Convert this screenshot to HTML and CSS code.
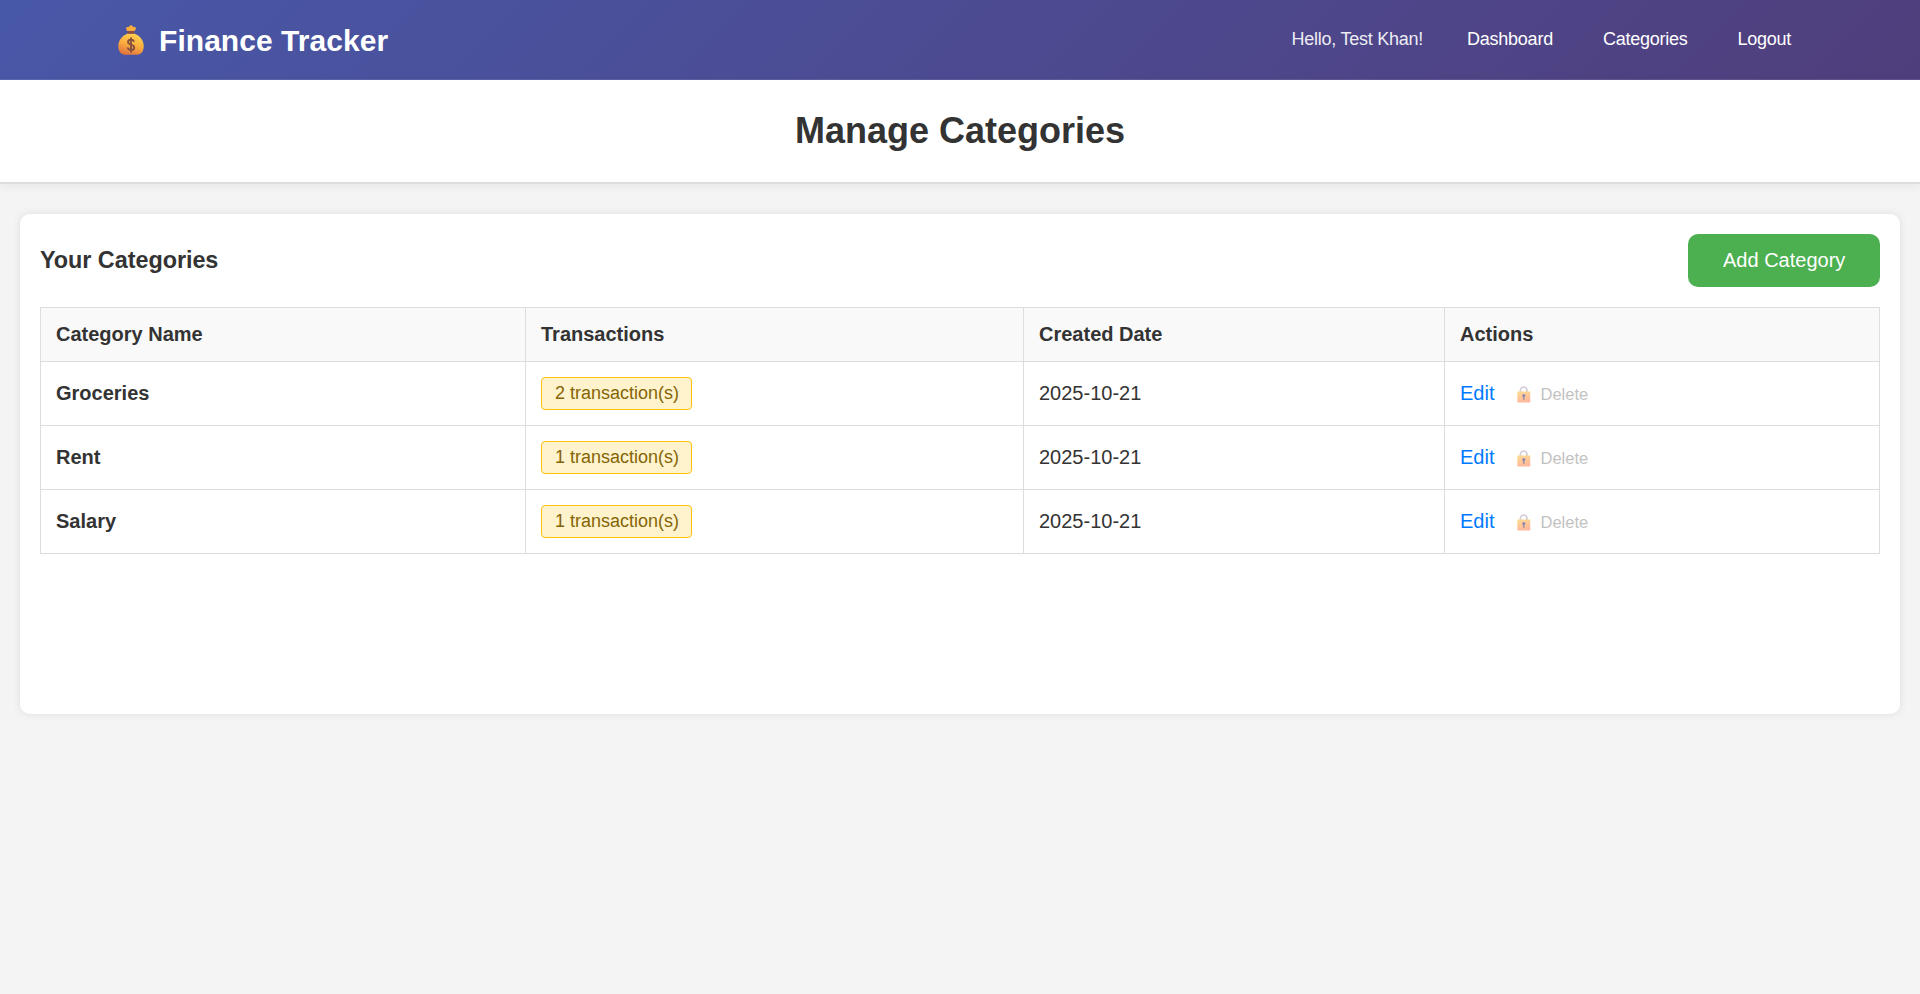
FILE: index.html
```html
<!DOCTYPE html>
<html lang="en">
<head>
<meta charset="utf-8">
<title>Manage Categories</title>
<link rel="stylesheet" href="styles.css">
</head>
<body>
<svg class="defs" width="0" height="0" aria-hidden="true">
  <defs>
    <linearGradient id="gold" x1="0.7" y1="0" x2="0.35" y2="1">
      <stop offset="0" stop-color="#ffd34f"/><stop offset="0.5" stop-color="#fbb040"/><stop offset="1" stop-color="#e0733f"/>
    </linearGradient>
    <linearGradient id="body" x1="0" y1="0" x2="0.3" y2="1">
      <stop offset="0" stop-color="#ffc648"/><stop offset="1" stop-color="#ff8a5c"/>
    </linearGradient>
    <symbol id="lock" viewBox="0 0 14 17">
      <path d="M3.4 7V4.6a3.3 3.6 0 0 1 6.6 0V7" fill="none" stroke="#b3abba" stroke-width="1.7"/>
      <rect x="0.3" y="5.6" width="13" height="10.8" rx="0.9" fill="url(#body)"/>
      <circle cx="6.8" cy="9.6" r="1.6" fill="#4b3f70"/>
      <rect x="6.1" y="9.6" width="1.4" height="4.2" rx="0.6" fill="#4b3f70"/>
    </symbol>
  </defs>
</svg>
<nav class="navbar">
  <a class="brand">
    <svg class="bag" viewBox="0 0 26 30">
      <path d="M9 5.500 8.600 2.400 10.600 2.600 11.500 1.200Q13 .2 14.500 1.200L15.400 2.600 17.500 2.400 16.800 5.500Z" fill="#fbae3c" stroke="#fbae3c" stroke-width=".8" stroke-linejoin="round"/>
      <path d="M9.800 8.500C4 10.500.3 15.500.3 21c0 5.500 2.700 8.700 7 8.700h11.400c4.300 0 7-3.200 7-8.700 0-5.500-3.700-10.500-9.500-12.500Z" fill="url(#gold)"/>
      <rect x="9.400" y="5.900" width="7.300" height="2.900" rx="1" fill="#8c4f48"/>
      <path d="M16 16.800c-.3-1.500-1.500-2.200-3-2.200-1.700 0-3 .9-3 2.500 0 3.400 6.200 1.800 6.200 5.300 0 1.700-1.400 2.600-3.200 2.600s-3.100-.9-3.300-2.500M13 12.400v15" fill="none" stroke="#85503f" stroke-width="1.900"/>
    </svg>
    <span class="brand-name">Finance Tracker</span>
  </a>
  <div class="links">
    <span class="hello">Hello, Test Khan!</span>
    <a>Dashboard</a>
    <a>Categories</a>
    <a>Logout</a>
  </div>
</nav>
<header class="page-head"><h1>Manage Categories</h1></header>
<main class="card">
  <div class="card-head">
    <h2>Your Categories</h2>
    <button class="add">Add Category</button>
  </div>
  <table class="table">
    <colgroup><col class="c-name"><col class="c-count"><col class="c-date"><col></colgroup>
    <thead><tr><th>Category Name</th><th>Transactions</th><th>Created Date</th><th>Actions</th></tr></thead>
    <tbody>
      <tr><td><strong>Groceries</strong></td><td><span class="badge">2 transaction(s)</span></td><td>2025-10-21</td>
        <td><div class="actions"><a class="edit">Edit</a><span class="locked"><svg><use href="#lock"/></svg>Delete</span></div></td></tr>
      <tr><td><strong>Rent</strong></td><td><span class="badge">1 transaction(s)</span></td><td>2025-10-21</td>
        <td><div class="actions"><a class="edit">Edit</a><span class="locked"><svg><use href="#lock"/></svg>Delete</span></div></td></tr>
      <tr><td><strong>Salary</strong></td><td><span class="badge">1 transaction(s)</span></td><td>2025-10-21</td>
        <td><div class="actions"><a class="edit">Edit</a><span class="locked"><svg><use href="#lock"/></svg>Delete</span></div></td></tr>
    </tbody>
  </table>
</main>
</body>
</html>
```
FILE: styles.css
```css
* { box-sizing: border-box; }
body {
  margin: 0;
  background: #f4f4f4;
  color: #333;
  font: 20px/23px "Liberation Sans", Arial, sans-serif;
}
.defs { display: block; height: 0; }
.navbar {
  display: flex;
  justify-content: space-between;
  align-items: center;
  height: 80px;
  padding: 0 129px 0 118px;
  background: linear-gradient(135deg, #4858a8 0%, #503e7c 100%);
  border-bottom: 1px solid rgba(255, 255, 255, 0.1);
  color: #fff;
}
.brand {
  display: flex;
  align-items: center;
  gap: 15px;
  font-size: 30px;
  font-weight: 700;
  line-height: 34px;
}
.brand-name { padding-top: 2px; letter-spacing: 0.05px; }
.bag { width: 26px; height: 30px; }
.links {
  display: flex;
  align-items: center;
  gap: 50px;
  font-size: 18px;
  letter-spacing: -0.25px;
}
.hello { margin-right: -6px; opacity: 0.9; }
.page-head {
  height: 104px;
  padding-top: 30px;
  background: #fff;
  border-bottom: 2px solid #ddd;
  box-shadow: 0 2px 10px rgba(0, 0, 0, 0.06);
  text-align: center;
}
h1 { margin: 0; font-size: 36px; line-height: 42px; }
.card {
  height: 500px;
  margin: 30px 20px;
  padding: 20px;
  background: #fff;
  border-radius: 10px;
  box-shadow: 0 0 10px rgba(0, 0, 0, 0.09);
}
.card-head {
  display: flex;
  justify-content: space-between;
  align-items: center;
  margin-bottom: 20px;
}
h2 { margin: 0; font-size: 23.4px; line-height: 27px; letter-spacing: -0.04px; }
.add {
  padding: 15px 35px;
  width: 192px;
  border: 0;
  border-radius: 10px;
  background: #4caf50;
  color: #fff;
  font: inherit;
  white-space: nowrap;
}
.table { width: 100%; table-layout: fixed; border-collapse: collapse; }
.c-name { width: 485px; }
.c-count { width: 498px; }
.c-date { width: 421px; }
th, td {
  padding: 15px;
  border: 1px solid #ddd;
  text-align: left;
  vertical-align: middle;
}
th { background: #f9f9f9; }
.badge {
  display: block;
  width: 151px;
  padding: 5px 0 5px 13px;
  border: 1px solid #ffc107;
  border-radius: 4px;
  background: #fff3cd;
  color: #856404;
  font-size: 18px;
  line-height: 21px;
}
.actions { display: flex; align-items: center; gap: 23px; }
.edit { color: #007bff; }
.locked {
  display: flex;
  align-items: center;
  gap: 9px;
  padding-top: 2px;
  color: #999;
  font-size: 16.5px;
  opacity: 0.6;
}
.locked svg { width: 14px; height: 17px; }
```
